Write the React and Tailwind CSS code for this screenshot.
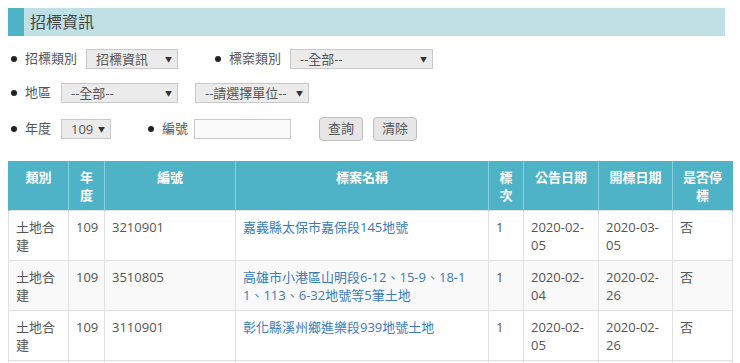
import React from 'react';

const font = { fontFamily: '"Open Sans", "Noto Sans CJK TC", sans-serif' };

const Bullet = ({ className = '' }) => (
  <span className={`block w-[6px] h-[6px] rounded-full bg-[#222] ${className}`} />
);

const FakeSelect = ({ value, className = '' }) => (
  <div
    className={`flex items-center justify-between h-[20px] pl-[9px] pr-[5px] bg-[#ebebeb] border border-[#c9c9c9] text-[13px] text-[#555] leading-none ${className}`}
  >
    <span>{value}</span>
    <span className="text-[7px] text-[#333]">▼</span>
  </div>
);

const rows = [
  {
    type: ['土地合', '建'],
    year: '109',
    no: '3210901',
    name: ['嘉義縣太保市嘉保段145地號'],
    round: '1',
    pub: ['2020-02-', '05'],
    open: ['2020-03-', '05'],
    stop: '否',
  },
  {
    type: ['土地合', '建'],
    year: '109',
    no: '3510805',
    name: ['高雄市小港區山明段6-12、15-9、18-1', '1、113、6-32地號等5筆土地'],
    round: '1',
    pub: ['2020-02-', '04'],
    open: ['2020-02-', '26'],
    stop: '否',
  },
  {
    type: ['土地合', '建'],
    year: '109',
    no: '3110901',
    name: ['彰化縣溪州鄉進樂段939地號土地'],
    round: '1',
    pub: ['2020-02-', '05'],
    open: ['2020-02-', '26'],
    stop: '否',
  },
];

const Lines = ({ items }) =>
  items.map((t, i) => (
    <React.Fragment key={i}>
      {i > 0 && <br />}
      {t}
    </React.Fragment>
  ));

const th = 'border-x border-[#86cfdc] px-[6px] pt-[7px] pb-[5px] align-top text-center font-bold';
const td = 'border border-[#e2e2e2] px-[7px] pt-[7px] pb-[6px] align-top';

export default function App() {
  return (
    <div className="bg-white w-[740px] h-[363px] overflow-hidden pl-[8px] pt-[8px] text-[#555]" style={font}>
      {/* Title bar */}
      <div className="flex w-[717px] h-[28px] bg-[#bfe1e5]">
        <div className="w-[16px] bg-[#4fb5c6]" />
        <h1 className="ml-[6px] text-[16px] leading-[28px] text-[#444]">招標資訊</h1>
      </div>

      {/* Filters */}
      <div className="flex items-center mt-[13px] h-[20px] text-[13px]">
        <Bullet className="ml-[3px]" />
        <span className="ml-[8px] w-[61px]">招標類別</span>
        <FakeSelect value="招標資訊" className="w-[92px]" />
        <Bullet className="ml-[37px]" />
        <span className="ml-[8px] w-[61px]">標案類別</span>
        <FakeSelect value="--全部--" className="w-[143px]" />
      </div>

      <div className="flex items-center mt-[14px] h-[20px] text-[13px]">
        <Bullet className="ml-[3px]" />
        <span className="ml-[8px] w-[36px]">地區</span>
        <FakeSelect value="--全部--" className="w-[117px]" />
        <FakeSelect value="--請選擇單位--" className="ml-[17px] w-[114px]" />
      </div>

      <div className="flex items-center mt-[14px] h-[24px] text-[13px]">
        <Bullet className="ml-[3px]" />
        <span className="ml-[8px] w-[36px]">年度</span>
        <FakeSelect value="109" className="w-[50px]" />
        <Bullet className="ml-[37px]" />
        <span className="ml-[8px] w-[32px]">編號</span>
        <input className="w-[97px] h-[20px] bg-[#fafafa] border border-[#c9c9c9] outline-none" />
        <button className="ml-[28px] w-[44px] h-[24px] rounded-[4px] bg-[#e6e6e6] border border-[#bdbdbd] text-[13px] text-[#555]">
          查詢
        </button>
        <button className="ml-[10px] w-[44px] h-[24px] rounded-[4px] bg-[#e6e6e6] border border-[#bdbdbd] text-[13px] text-[#555]">
          清除
        </button>
      </div>

      {/* Table */}
      <table className="mt-[20px] w-[724px] table-fixed border-collapse text-[13px] leading-[18px]">
        <colgroup>
          <col className="w-[60px]" />
          <col className="w-[36px]" />
          <col className="w-[131px]" />
          <col className="w-[253px]" />
          <col className="w-[35px]" />
          <col className="w-[75px]" />
          <col className="w-[74px]" />
          <col className="w-[60px]" />
        </colgroup>
        <thead>
          <tr className="bg-[#4fb3c7] text-white h-[49px]">
            <th className={`${th} border-l-[#4fb3c7]`}>類別</th>
            <th className={th}>年度</th>
            <th className={th}>編號</th>
            <th className={th}>標案名稱</th>
            <th className={th}>標次</th>
            <th className={th}>公告日期</th>
            <th className={th}>開標日期</th>
            <th className={`${th} border-r-[#4fb3c7]`}>是否停標</th>
          </tr>
        </thead>
        <tbody>
          {rows.map((r, i) => (
            <tr key={i} className={`h-[49px] ${i % 2 === 1 ? 'bg-[#f9f9f9]' : 'bg-white'}`}>
              <td className={td}>
                <Lines items={r.type} />
              </td>
              <td className={`${td} px-[6px]`}>{r.year}</td>
              <td className={td}>{r.no}</td>
              <td className={`${td} px-[6px]`}>
                <a href="#" className="text-[#3a7cb8]">
                  <Lines items={r.name} />
                </a>
              </td>
              <td className={td}>{r.round}</td>
              <td className={td}>
                <Lines items={r.pub} />
              </td>
              <td className={td}>
                <Lines items={r.open} />
              </td>
              <td className={td}>{r.stop}</td>
            </tr>
          ))}
          {/* next row, below the fold */}
          <tr className="h-[49px] bg-[#f9f9f9]">
            {Array(8)
              .fill(0)
              .map((_, i) => (
                <td key={i} className={td} />
              ))}
          </tr>
        </tbody>
      </table>
    </div>
  );
}
